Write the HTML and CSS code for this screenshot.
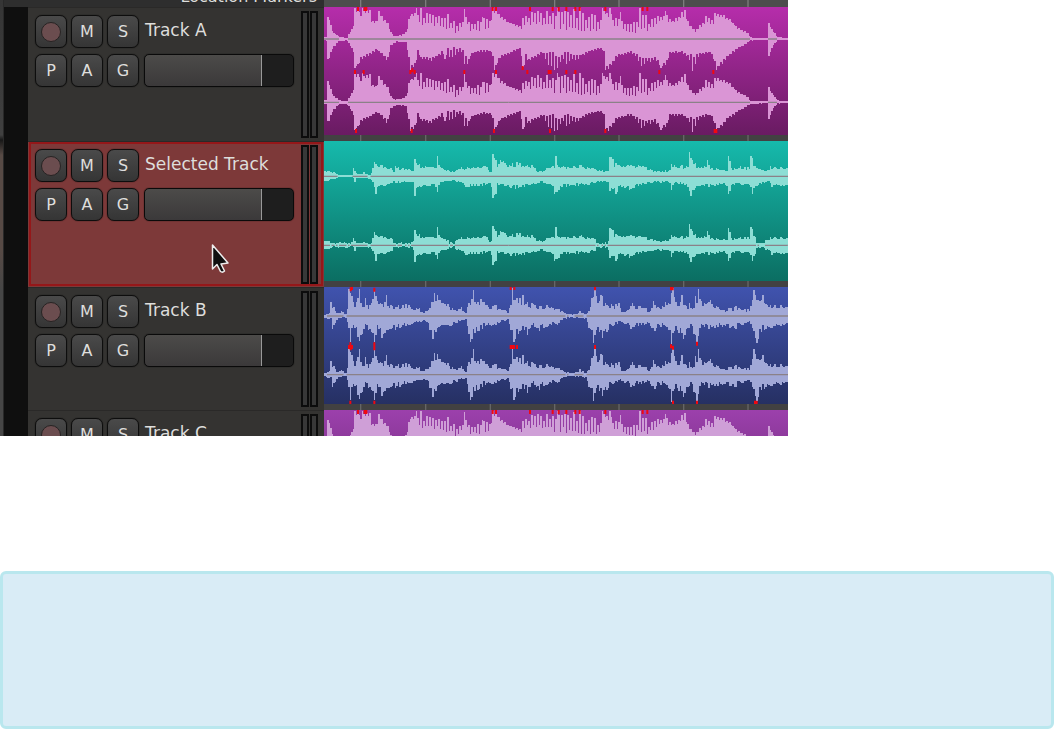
FILE: index.html
```html
<!DOCTYPE html>
<html lang="en">
<head>
<meta charset="utf-8">
<meta name="viewport" content="width=device-width, initial-scale=1">
<title>Selected track</title>
<link rel="stylesheet" href="styles.css">
</head>
<body>
<main>
<section class="editor" aria-label="Track list">
  <div class="edge"></div>
  <div class="gutter"></div>
  <div class="tracks">
    <div class="ruler">
      <div class="ruler-name"><span>Location Markers</span></div>
      <svg class="ticks" viewBox="0 0 1392 10" preserveAspectRatio="none"></svg>
    </div>
    <article class="track normal">
      <div class="header">
        <div class="controls">
          <button type="button" aria-label="Record"><i class="record"></i></button><button type="button">M</button><button type="button">S</button>
          <label class="name" for="fader-a">Track A</label>
          <button type="button">P</button><button type="button">A</button><button type="button">G</button>
          <input class="fader" id="fader-a" type="range" value="79">
        </div>
        <div class="meters"><i></i><i></i></div>
      </div>
      <div class="lane"><svg class="ticks" viewBox="0 0 1392 10" preserveAspectRatio="none"></svg><svg class="clip magenta" data-wave="drums" viewBox="0 0 1392 384" preserveAspectRatio="none"></svg></div>
    </article>
    <article class="track tall selected">
      <div class="header">
        <div class="controls">
          <button type="button" aria-label="Record"><i class="record"></i></button><button type="button">M</button><button type="button">S</button>
          <label class="name" for="fader-s">Selected Track</label>
          <button type="button">P</button><button type="button">A</button><button type="button">G</button>
          <input class="fader" id="fader-s" type="range" value="79">
        </div>
        <div class="meters"><i></i><i></i></div>
        <svg class="cursor" viewBox="0 0 20 32" width="20" height="32" aria-hidden="true"><path d="M1.5 2v24l4.5-4.500 3.500 7q2 1.500 4-.5l-3.500-7 7-1z"/></svg>
      </div>
      <div class="lane"><svg class="ticks" viewBox="0 0 1392 10" preserveAspectRatio="none"></svg><svg class="clip teal" data-wave="bass" viewBox="0 0 1392 420" preserveAspectRatio="none"></svg></div>
    </article>
    <article class="track short">
      <div class="header">
        <div class="controls">
          <button type="button" aria-label="Record"><i class="record"></i></button><button type="button">M</button><button type="button">S</button>
          <label class="name" for="fader-b">Track B</label>
          <button type="button">P</button><button type="button">A</button><button type="button">G</button>
          <input class="fader" id="fader-b" type="range" value="79">
        </div>
        <div class="meters"><i></i><i></i></div>
      </div>
      <div class="lane"><svg class="ticks" viewBox="0 0 1392 10" preserveAspectRatio="none"></svg><svg class="clip blue" data-wave="keys" viewBox="0 0 1392 351" preserveAspectRatio="none"></svg></div>
    </article>
    <article class="track normal">
      <div class="header">
        <div class="controls">
          <button type="button" aria-label="Record"><i class="record"></i></button><button type="button">M</button><button type="button">S</button>
          <label class="name" for="fader-c">Track C</label>
          <button type="button">P</button><button type="button">A</button><button type="button">G</button>
          <input class="fader" id="fader-c" type="range" value="79">
        </div>
        <div class="meters"><i></i><i></i></div>
      </div>
      <div class="lane"><svg class="ticks" viewBox="0 0 1392 10" preserveAspectRatio="none"></svg><svg class="clip violet" data-wave="drums" viewBox="0 0 1392 384" preserveAspectRatio="none"></svg></div>
    </article>
  </div>
</section>
<aside class="note"></aside>
</main>
<script src="waves.js"></script>
</body>
</html>
```

FILE: styles.css
```css
* { box-sizing: border-box; }
body { margin: 0; background: #fff; font-family: "DejaVu Sans", sans-serif; font-size: 16px; }

.editor {
  display: grid;
  grid-template-columns: 4px 24px 1fr;
  max-width: 788px;
  max-height: 436px;
  overflow: hidden;
  background: #2e2e2e;
  color: #dededc;
}
.edge { background: linear-gradient(#353535 0, #404040 135px, #181818 140px, #574a45 155px, #574a45 250px, #464646 290px, #464646); border-right: 1px solid #292929; }
.gutter { margin-top: 7px; background: #0f0f0f; }
.tracks { min-width: 0; }

.ruler, .track { display: grid; grid-template-columns: 296px 1fr; }
.ruler { height: 7px; }
.ruler-name { display: flex; align-items: flex-end; justify-content: flex-end; height: 7px; padding-right: 7px; line-height: 20px; white-space: nowrap; }
.ticks { display: block; width: 100%; height: 100%; background: #4d4d4d; }
.ticks path { fill: #7d7d7d; }

.header {
  position: relative;
  display: flex;
  gap: 7px;
  padding: 7px 6px 0;
  background: #343331;
  border-top: 1px solid #2a2928;
}
.controls { flex: 1; display: grid; grid-template-columns: 33px 33px 33px 1fr; grid-auto-rows: 33px; gap: 6px 3px; }
button {
  display: flex; align-items: center; justify-content: center;
  margin: 0 0 0 1px;
  padding: 0;
  border: 1px solid #0d0d0d;
  border-radius: 7px;
  background: linear-gradient(#4a4a4a, #353535);
  box-shadow: 0 0 1px #000;
  color: #dededc;
  font: inherit;
}
.record { width: 20px; height: 20px; border: 1px solid #272323; border-radius: 50%; background: #6b4d4f; }
.name { margin-left: 2px; padding-left: 1px; font-size: 17px; line-height: 31px; white-space: nowrap; }
.fader {
  appearance: none;
  height: 33px;
  min-width: 0;
  margin: 0 0 0 2px;
  border: 1px solid #0a0a0a;
  border-radius: 5px;
  background: linear-gradient(90deg, transparent 79%, #1e1e1e 79%), linear-gradient(#4c4b49, #3b393a);
  box-shadow: 0 0 1px #000;
}
.fader::-webkit-slider-thumb { appearance: none; width: 1px; height: 31px; background: #999; }
.meters { display: flex; gap: 1px; margin: -4px 0 3px; }
.meters i { width: 8px; border: 2px solid #0c0c0c; background: #383838; }

.normal { height: 134px; }
.tall { height: 146px; }
.short { height: 123px; }
.selected .header { background: #7d3939; outline: 2px solid #951719; outline-offset: -3px; }
.cursor { position: absolute; left: 183px; top: 101px; }
.cursor path { fill: #101010; stroke: #eee; stroke-width: 1.5; stroke-linejoin: round; }

.lane { display: grid; grid-template-rows: 1fr 6px; }
.lane .ticks { grid-area: 2 / 1; background: #424142; }
.lane .ticks path { fill: #666; }
.clip { grid-area: 1 / 1; display: block; width: 100%; height: 100%; }
.magenta { background: linear-gradient(#b62dab, #691b62); }
.teal { background: linear-gradient(#16baac, #0b6e62); }
.blue { background: linear-gradient(#4053ae, #263063); }
.violet { background: linear-gradient(#9c40ac, #5b2465); }
.wave { fill: #da95d5; }
.teal .wave { fill: #8dded5; }
.blue .wave { fill: #a1a8d7; }
.violet .wave { fill: #cf9fd7; }
.axis { fill: #8b8188; }
.peak { fill: #f00810; }

.note { min-height: 158px; margin-top: 135px; border: 3px solid #b9e7ee; border-radius: 6px; background: #d9ecf6; }
```

FILE: waves.js
```js
// Envelopes are "position,high[,low]" lists; columns vary between low and high.
const waves = {
  drums: {
    axes: [96, 286],
    up: '0,8 12,8 13,66 18,42 26,20 45,6 68,4 74,20 84,38 90,65 93,92 105,92 110,62 115,92 136,92 140,56 154,56 165,84 174,65 190,50 197,22 208,9 230,12 244,22 249,42 255,78 274,88 278,92 280,58 292,92,38 308,92,38 335,85,35 362,78,25 395,65,12 416,62,30 422,90,35 435,55,25 475,65,18 493,60,25 505,92 518,90 525,72 545,58 580,42 589,36 595,82,42 640,85,42 665,85,38 700,94,25 780,94,22 830,80,14 835,92 850,75 858,92 865,55,40 890,82,25 915,45,14 948,92,22 975,62,25 1000,80,50 1025,85,50 1045,60,45 1080,88,68 1092,50,40 1110,32,16 1145,70,45 1165,60,42 1170,78 1195,76 1215,62 1240,34 1268,20 1275,6 1290,3 1331,3 1332,48 1340,34 1358,6 1391,3',
    down: '0,5 12,5 13,60 24,30 40,8 65,4 75,18 86,44 91,88 98,88 106,65 130,52 155,34 188,64 198,22 215,8 244,12 250,50 258,92 273,82 278,35 288,60 320,66 345,50 362,60,20 410,50,25 420,75,35 428,75 440,48 470,38 500,40 512,92 525,60 585,30 594,85,30 612,70 650,45 675,85,30 692,92,40 730,75,35 760,60 790,40 830,30 841,50 843,92 857,88 875,55 920,42 952,82,55 990,62 1008,88 1024,82 1034,45 1070,42 1095,65,48 1105,95,40 1125,50 1158,42 1168,70 1178,94 1192,76 1214,50 1244,28 1268,12 1276,5 1331,3 1332,52 1344,22 1358,4 1391,3',
    scale: [1, 0.95], floor: 0.84, contrast: true,
    peaks: [[102,6],[122,6],[127,6],[506,6],[516,6],[618,6],[686,6],[704,6],[727,6],[754,6],[767,6],[844,6],[956,6],[970,6],[93,195],[119,195],[259,195],[265,190],[272,195],[421,195],[516,195],[596,183],[610,195],[674,195],[680,195],[727,195],[754,195],[1006,195],[1168,195],[96,372],[263,372],[510,372],[678,372],[844,372],[1172,372],[1177,372]]
  },
  bass: {
    axes: [106, 313],
    up: '0,20 25,14 42,4 84,4 88,25 95,8 118,12 138,5 145,32 151,44 172,36 198,28 206,18 212,30 235,25 266,22 272,52 278,38 320,32 334,34 338,62 343,36 365,20 385,14 395,25 430,30 485,32 493,16 503,18 507,66 511,64 515,36 530,50 545,40 580,42 620,36 635,22 650,16 670,28 689,36 694,62 699,32 730,30 770,34 805,28 838,16 852,18 858,58 864,58 868,40 915,38 955,34 985,20 1030,18 1040,36 1080,32 1092,38 1096,72 1103,50 1120,30 1144,34 1149,50 1154,28 1190,22 1208,24 1213,60 1219,26 1250,30 1276,30 1281,62 1288,35 1310,22 1330,18 1340,30 1391,28',
    down: '0,16 25,10 42,3 84,3 90,18 96,6 138,8 148,30 153,52 162,36 198,22 266,18 271,58 277,36 330,28 338,48 344,24 385,12 425,32 480,30 497,20 503,50 507,66 512,62 517,28 545,34 575,38 620,30 650,18 680,28 690,54 696,50 710,32 770,30 820,20 850,16 859,44 870,38 877,52 884,34 915,42 935,32 980,20 1030,18 1041,40 1050,22 1085,28 1102,58 1108,38 1155,32 1200,24 1213,54 1219,26 1270,30 1284,54 1291,32 1330,16 1345,32 1391,28',
    scale: [1, 0.88], floor: 0.68, quiet: [[15, 85], [205, 262], [370, 388], [810, 850], [1294, 1322]], peaks: []
  },
  keys: {
    axes: [87, 263],
    up: '0,6 16,12 20,42 28,30 36,8 52,14 66,4 69,58 76,82 84,80 86,40 96,44 105,80 113,42 122,55 132,35 142,60 151,80 160,68 170,38 185,62 194,38 220,32 245,35 270,32 295,16 312,24 319,46 330,68 345,62 362,42 382,24 410,28 424,12 432,50 446,78 452,48 468,50 495,28 512,34 535,20 550,16 558,50 564,85 573,82 580,50 594,62 606,48 625,40 645,36 675,32 697,28 718,10 745,5 765,16 785,8 793,22 800,62 814,85 824,48 832,64 845,34 884,38 892,15 910,24 925,38 960,28 978,16 986,46 1005,36 1022,42 1034,55 1044,85 1050,56 1065,44 1075,62 1086,30 1096,38 1105,18 1110,58 1124,80 1132,42 1158,48 1175,32 1200,22 1235,30 1275,22 1290,78 1296,60 1315,62 1326,34 1391,35',
    down: '0,6 18,12 25,38 38,8 66,5 70,55 78,78 86,45 96,58 104,75 112,68 120,34 138,50 151,78 158,45 172,66 182,48 210,42 235,36 285,18 310,20 318,55 324,68 340,48 370,34 424,12 432,55 440,78 450,55 480,36 496,30 514,28 550,14 558,45 570,78 580,64 595,42 608,58 625,38 645,46 675,28 697,28 710,12 735,5 785,10 794,45 806,82 820,50 834,65 850,42 885,22 922,38 970,26 990,44 1015,30 1030,50 1042,85 1053,42 1078,68 1094,34 1110,60 1120,84 1126,42 1155,40 1200,35 1235,38 1275,24 1286,62 1298,82 1308,50 1345,40 1391,24',
    scale: [1, 0.97], floor: 0.55,
    peaks: [[80,7],[84,3],[151,8],[560,3],[571,3],[813,4],[1041,4],[1046,4],[79,172],[75,180],[80,184],[84,180],[151,172],[151,184],[560,180],[565,180],[570,180],[579,180],[813,180],[1041,178],[1047,182],[1119,170],[79,347],[151,347],[1047,347],[1119,347],[1293,347],[1298,347]]
  }
};

const noise = n => {
  const v = Math.sin(n * 91.7) * 4375.5;
  return v - Math.floor(v);
};

function sample(text, seed, floor, contrast) {
  const points = text.split(' ').map(p => p.split(',').map(Number));
  const heights = [];
  let i = 0;
  for (let c = 0; c < 310; c++) {
    const x = c * 4.5;
    while (i < points.length - 2 && points[i + 1][0] <= x) i++;
    const [x0, h0, l0 = h0 * floor] = points[i];
    const [x1, h1, l1 = h1 * floor] = points[i + 1];
    const t = Math.min(1, (x - x0) / (x1 - x0));
    const high = h0 + (h1 - h0) * t;
    const low = l0 + (l1 - l0) * t;
    let r = noise(c + seed);
    if (contrast) r = (c + seed) % 2 ? r * 0.3 : 0.45 + r * 0.55;
    let h = low + (high - low) * r;
    // A local maximum inside this column is kept whole.
    points.forEach((p, k) => {
      if (k && k < points.length - 1 && p[0] >= x && p[0] < x + 4.5 &&
          p[1] > points[k - 1][1] && p[1] >= points[k + 1][1]) h = Math.max(h, p[1]);
    });
    heights.push(Math.max(3, Math.round(h)));
  }
  return heights;
}

document.querySelectorAll('.clip').forEach(svg => {
  const data = waves[svg.dataset.wave];
  const ups = sample(data.up, 2, data.floor, data.contrast);
  const downs = sample(data.down, 701, data.floor, data.contrast);
  let markup = '';
  data.axes.forEach((axis, channel) => {
    let wave = '';
    let line = '';
    ups.forEach((h, c) => {
      const x = c * 4.5;
      const quiet = channel === 1 && (data.quiet || []).some(q => x > q[0] && x < q[1]);
      const up = quiet ? 3 + Math.round(noise(c) * 6) : h * data.scale[channel];
      const down = quiet ? 3 + Math.round(noise(c + 9) * 4) : downs[c] * data.scale[channel];
      wave += `M${x} ${axis - up}h4.5V${axis + down}h-4.5z`;
      if (up > 6) line += `M${x} ${axis - 2}h4.5v4h-4.5z`;
    });
    markup += `<path class="wave" shape-rendering="crispEdges" d="${wave}"/><path class="axis" d="${line}"/>`;
  });
  markup += `<path class="peak" d="${data.peaks.map(([x, y]) => `M${x - 3} ${y - 6}h6v12h-6z`).join('')}"/>`;
  svg.innerHTML = markup;
});

document.querySelectorAll('.ticks').forEach(svg => {
  svg.innerHTML = `<path d="${[108, 303, 497, 690, 883, 1077, 1270].map(x => `M${x} 0h4v10h-4z`).join('')}"/>`;
});
```
